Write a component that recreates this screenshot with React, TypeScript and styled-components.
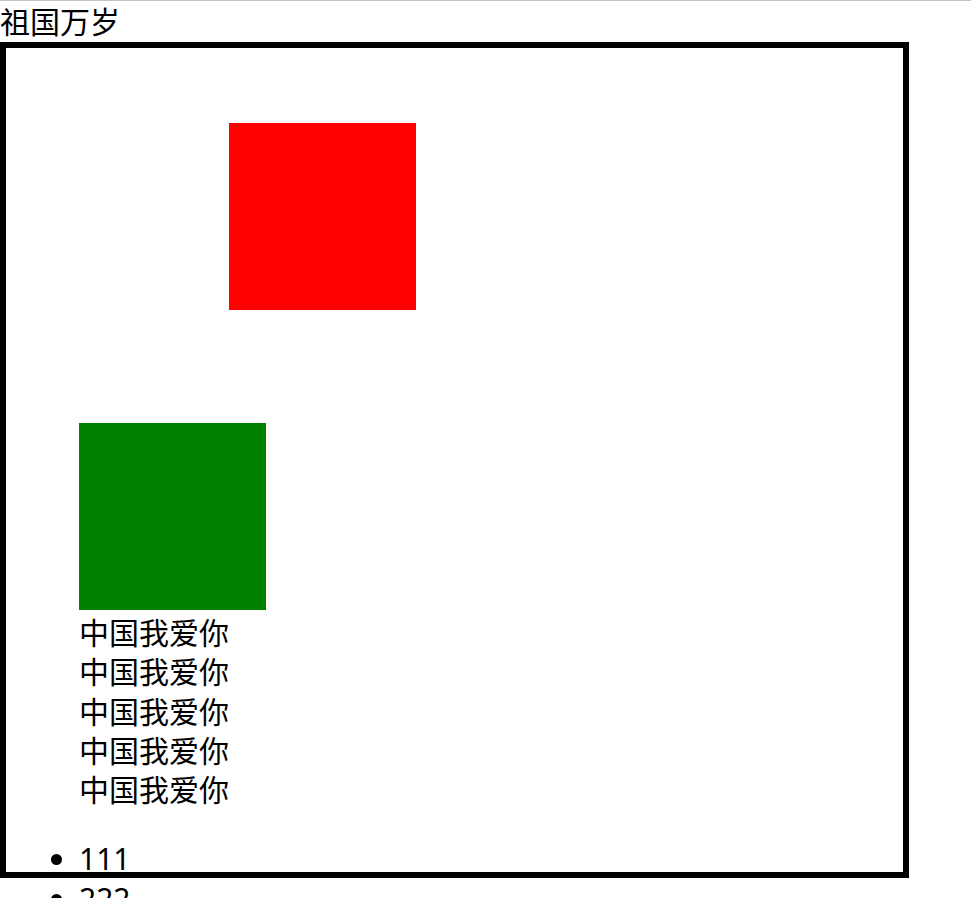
import styled, { createGlobalStyle } from "styled-components";

const GlobalStyle = createGlobalStyle`
  html, body {
    margin: 0;
    padding: 0;
    background: #ffffff;
  }
  body {
    font-family: "Noto Sans", "Noto Sans CJK SC", sans-serif;
    font-size: 30px;
    line-height: 39.3px;
    color: #000000;
    border-top: 1px solid #c4c4c4;
    padding-bottom: 60px;
  }
`;

const Title = styled.div`
  height: 41px;
  line-height: 41px;
`;

const Frame = styled.div`
  box-sizing: border-box;
  width: 909px;
  height: 836px;
  border: 6px solid #000000;
  padding-left: 73px;
`;

const Square = styled.div<{ $color: string; $top: number; $left: number }>`
  width: 187px;
  height: 187px;
  background: ${(p) => p.$color};
  margin-top: ${(p) => p.$top}px;
  margin-left: ${(p) => p.$left}px;
`;

const Lines = styled.div`
  padding-top: 3px;
`;

const Line = styled.div`
  white-space: nowrap;
`;

const List = styled.ul`
  margin: 30px 0 0;
  padding: 0;
  list-style: disc outside;
`;

const Item = styled.li`
  line-height: 39.3px;
`;

const lines = Array.from({ length: 5 }, () => "中国我爱你");

export default function App() {
  return (
    <>
      <GlobalStyle />
      <Title>祖国万岁</Title>
      <Frame>
        <Square $color="#ff0000" $top={75} $left={150} />
        <Square $color="#008000" $top={113} $left={0} />
        <Lines>
          {lines.map((t, i) => (
            <Line key={i}>{t}</Line>
          ))}
        </Lines>
        <List>
          <Item>111</Item>
          <Item>222</Item>
        </List>
      </Frame>
    </>
  );
}
